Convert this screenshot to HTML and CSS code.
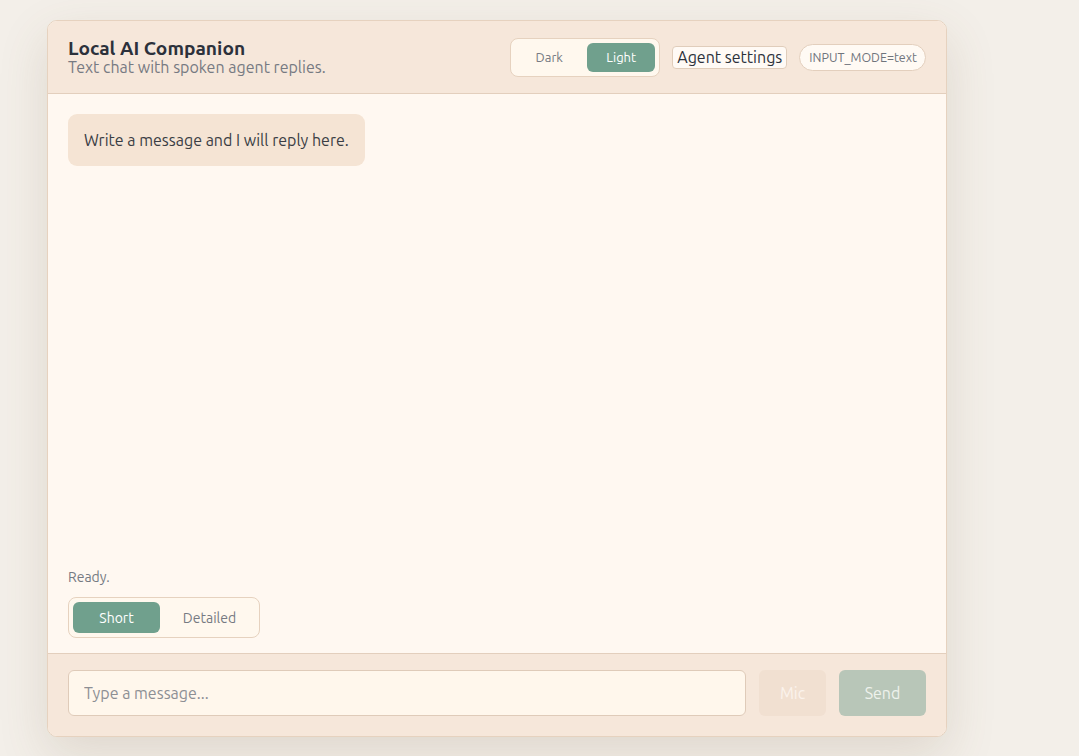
FILE: index.html
```html
<!doctype html>
<html>
<head>
  <title>Local AI Companion</title>
  <link rel="stylesheet" href="styles.css">
</head>
<body>
  <div class="app">
    <header class="app-header">
      <div class="titles">
        <h1 class="title">Local AI Companion</h1>
        <p class="subtitle">Text chat with spoken agent replies.</p>
      </div>
      <div class="header-actions">
        <div class="segmented theme-toggle">
          <button class="seg-btn">Dark</button>
          <button class="seg-btn active">Light</button>
        </div>
        <button class="settings-btn">Agent settings</button>
        <span class="mode-pill">INPUT_MODE=text</span>
      </div>
    </header>

    <main class="chat">
      <ul class="messages">
        <li class="bubble">Write a message and I will reply here.</li>
      </ul>
      <div class="status">Ready.</div>
      <div class="segmented length-toggle">
        <button class="seg-btn active short">Short</button>
        <button class="seg-btn detailed">Detailed</button>
      </div>
    </main>

    <form class="composer">
      <input class="composer-input" autocomplete="off" placeholder="Type a message..." />
      <button type="button" class="mic-btn" disabled>Mic</button>
      <button class="send-btn" disabled>Send</button>
    </form>
  </div>
</body>
</html>
```

FILE: styles.css
```css
html, body { height: 100%; }
body {
  margin: 0;
  padding: 20px 47px;
  box-sizing: border-box;
  background: #f3efe9;
  font-family: "Ubuntu", "Noto Sans", sans-serif;
  color: #2f3440;
}

.app {
  width: 900px;
  height: 717px;
  display: flex;
  flex-direction: column;
  box-sizing: border-box;
  border: 1px solid #e6d2bf;
  border-radius: 10px;
  overflow: hidden;
  background: #fff8f1;
  box-shadow: 0 18px 50px rgba(120, 95, 60, 0.16);
}

.app-header {
  display: flex;
  align-items: center;
  justify-content: space-between;
  padding: 0 20px;
  height: 72px;
  flex: none;
  background: #f6e7da;
  border-bottom: 1px solid #e3cfbd;
}
.title { margin: 0; font-size: 19.2px; font-weight: 700; line-height: 20px; color: #2c313b; }
.subtitle { margin: 0; font-size: 16px; line-height: 19px; color: #767a82; }

.header-actions { display: flex; align-items: center; gap: 12px; }

.segmented {
  display: flex;
  gap: 4px;
  padding: 4px;
  border: 1px solid #e6d2bf;
  border-radius: 8px;
  background: #fff8ee;
}
.seg-btn {
  border: 0;
  background: transparent;
  border-radius: 6px;
  font-family: inherit;
  color: #767a82;
  cursor: pointer;
}
.seg-btn.active { background: #70a08d; color: #fff; }

.theme-toggle .seg-btn { width: 68px; height: 29px; font-size: 13px; }
.length-toggle { width: fit-content; }
.length-toggle .seg-btn { height: 31px; font-size: 14px; }
.length-toggle .short { width: 87px; }
.length-toggle .detailed { width: 91px; }

.settings-btn {
  font-family: inherit;
  font-size: 16px;
  color: #2c313b;
  background: #fffaf5;
  border: 1px solid #e0cdbb;
  border-radius: 4px;
  padding: 0 4px;
  height: 23px;
  line-height: 20px;
}

.mode-pill {
  font-size: 12.5px;
  color: #6f747c;
  background: #fffaf4;
  border: 1px solid #e3cfbd;
  border-radius: 14px;
  padding: 0 8px 0 9px;
  height: 25px;
  line-height: 25px;
}

.chat {
  flex: 1;
  display: flex;
  flex-direction: column;
  padding: 20px 20px 15px;
  min-height: 0;
}
.messages { list-style: none; margin: 0; padding: 0; flex: 1; }
.bubble {
  display: inline-block;
  padding: 0 16px;
  line-height: 52px;
  font-size: 16px;
  color: #3a3d44;
  background: #f5e4d4;
  border-radius: 9px;
}
.status { font-size: 14px; line-height: 17px; color: #767a82; margin-bottom: 11px; }

.composer {
  flex: none;
  display: flex;
  gap: 13px;
  padding: 16px 20px 20px;
  background: #f6e7da;
  border-top: 1px solid #e3cfbd;
}
.composer-input {
  flex: 1;
  height: 46px;
  box-sizing: border-box;
  padding: 0 15px;
  font-family: inherit;
  font-size: 16px;
  color: #2c313b;
  background: #fff7ec;
  border: 1px solid #dfcbb9;
  border-radius: 6px;
}
.composer-input::placeholder { color: #8d8f94; }
.mic-btn, .send-btn {
  height: 46px;
  border: 0;
  border-radius: 6px;
  font-family: inherit;
  font-size: 16px;
}
.mic-btn { width: 67px; background: #f1e0d1; color: #fbf3ec; }
.send-btn { width: 87px; background: #b8c6b8; color: #eef2ec; }
```
